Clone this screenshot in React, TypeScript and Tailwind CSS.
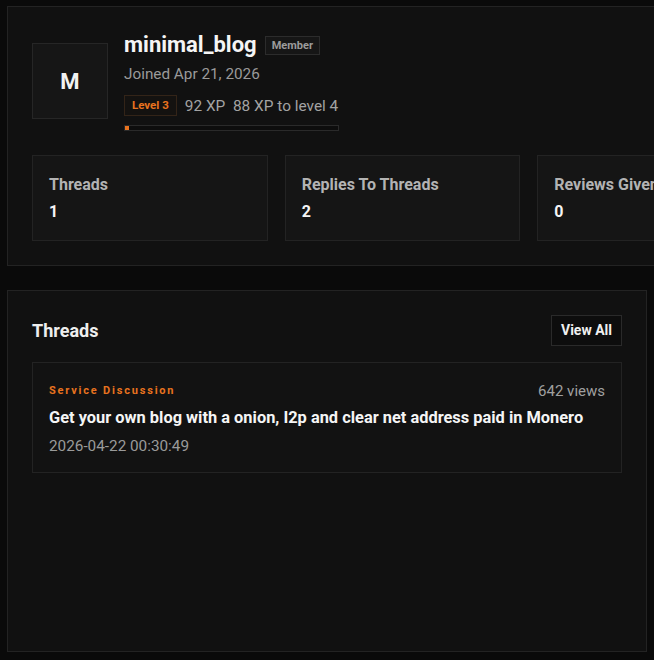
import React from 'react';

const stats = [
  { label: 'Threads', value: 1 },
  { label: 'Replies To Threads', value: 2 },
  { label: 'Reviews Given', value: 0 },
];

const threads = [
  {
    category: 'Service Discussion',
    views: 642,
    title: 'Get your own blog with a onion, I2p and clear net address paid in Monero',
    date: '2026-04-22 00:30:49',
  },
];

export default function App() {
  const xp = 92;
  const nextLevelXp = 88;
  const progress = 2;

  return (
    <div className="min-h-screen w-full overflow-hidden bg-[#0a0a0a] px-[7px] pt-[6px] pb-2 font-['Roboto',sans-serif] text-white">
      {/* Profile header */}
      <section className="w-[791px] border border-[#232323] bg-[#111111] p-6">
        <div className="flex items-center gap-4">
          <div className="flex h-[76px] w-[76px] items-center justify-center border border-[#262626] bg-[#161616] text-[22px] font-bold text-[#f2f2f2]">
            M
          </div>
          <div className="flex flex-col">
            <div className="flex items-center gap-2">
              <h1 className="text-[22px] leading-7 font-bold text-[#f5f5f5]">minimal_blog</h1>
              <span className="border border-[#2c2c2c] bg-[#161616] px-1.5 py-[1px] text-[11px] leading-[15px] font-bold text-[#9c9c9c]">
                Member
              </span>
            </div>
            <p className="mt-[5px] text-[15.3px] leading-5 text-[#9a9a9a]">Joined Apr 21, 2026</p>
            <div className="mt-[11px] flex items-center gap-2">
              <span className="border border-[#332418] bg-[#141210] px-[7px] py-[2px] text-[11.5px] leading-[15px] font-bold text-[#e8731f]">
                Level 3
              </span>
              <span className="text-[15.4px] leading-5 text-[#a3a3a3]">
                {xp} XP&nbsp;&nbsp;{nextLevelXp} XP to level 4
              </span>
            </div>
            <div className="mt-[9px] h-[6px] w-[215px] border border-[#2a2a2a] bg-[#0d0d0d]">
              <div className="h-full bg-[#e8731f]" style={{ width: `${progress}%` }} />
            </div>
          </div>
        </div>

        <div className="mt-6 grid grid-cols-3 gap-[17px]">
          {stats.map((s) => (
            <div key={s.label} className="border border-[#232323] bg-[#151515] px-4 pt-[19px] pb-[18px]">
              <div className="text-[16px] leading-5 font-bold whitespace-nowrap text-[#b3b3b3]">{s.label}</div>
              <div className="mt-[7px] text-[16px] leading-5 font-bold text-[#f5f5f5]">{s.value}</div>
            </div>
          ))}
        </div>
      </section>

      {/* Threads */}
      <section className="mt-[24px] min-h-[362px] border border-[#232323] bg-[#111111] p-6">
        <div className="flex items-center justify-between">
          <h2 className="text-[18px] leading-7 font-bold text-[#eeeeee]">Threads</h2>
          <button className="h-[31px] border border-[#2a2a2a] bg-[#0d0d0d] px-[9px] text-[14px] font-bold text-[#f0f0f0]">
            View All
          </button>
        </div>

        <div className="mt-4 flex flex-col gap-3">
          {threads.map((t) => (
            <div key={t.title} className="border border-[#232323] bg-[#121212] px-4 pt-[17px] pb-4">
              <div className="flex items-center justify-between">
                <span className="text-[11px] leading-[22px] font-bold tracking-[1.8px] text-[#e8731f]">
                  {t.category}
                </span>
                <span className="text-[15px] leading-[22px] text-[#a0a0a0]">{t.views} views</span>
              </div>
              <div className="mt-1 text-[16.4px] leading-6 font-bold text-[#f5f5f5]">{t.title}</div>
              <div className="mt-[6px] text-[15.3px] leading-5 text-[#9a9a9a]">{t.date}</div>
            </div>
          ))}
        </div>
      </section>
    </div>
  );
}
